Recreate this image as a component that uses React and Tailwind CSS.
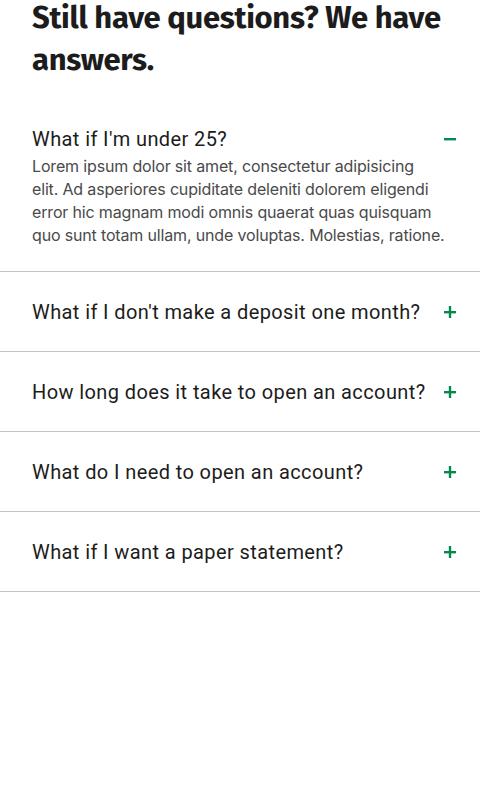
import React, { useState } from 'react';

const faqs = [
  {
    q: "What if I'm under 25?",
    a: [
      'Lorem ipsum dolor sit amet, consectetur adipisicing',
      'elit. Ad asperiores cupiditate deleniti dolorem eligendi',
      'error hic magnam modi omnis quaerat quas quisquam',
      'quo sunt totam ullam, unde voluptas. Molestias, ratione.',
    ],
  },
  { q: "What if I don't make a deposit one month?", a: ['Lorem ipsum dolor sit amet.'] },
  { q: 'How long does it take to open an account?', a: ['Lorem ipsum dolor sit amet.'] },
  { q: 'What do I need to open an account?', a: ['Lorem ipsum dolor sit amet.'] },
  { q: 'What if I want a paper statement?', a: ['Lorem ipsum dolor sit amet.'] },
];

function Icon({ open }) {
  return (
    <svg width="14" height="14" viewBox="0 0 14 14" className="shrink-0 text-[#008a4e]">
      <rect x="1" y="6" width="12" height="2.4" fill="currentColor" />
      {!open && <rect x="5.8" y="1" width="2.4" height="12" fill="currentColor" />}
    </svg>
  );
}

export default function App() {
  const [open, setOpen] = useState(0);

  return (
    <div className="min-h-[800px] bg-white font-['Inter',sans-serif]">
      <h1 className="pl-8 pr-4 -mt-[3px] text-[31px] font-bold leading-[42px] tracking-[-0.01em] text-[#1c1c1c] font-['Fira_Sans','Roboto',sans-serif]">
        Still have questions? We have answers.
      </h1>

      <div className="mt-[18px]">
        {faqs.map((f, i) => {
          const isOpen = open === i;
          return (
            <div key={i} className="border-b border-[#c4c4c4]">
              <button
                onClick={() => setOpen(isOpen ? -1 : i)}
                className={`flex w-full items-center justify-between gap-4 pl-8 pr-[23px] text-left ${isOpen ? 'pt-7' : 'pt-7 pb-[27px]'}`}
              >
                <span className="text-[20px] leading-6 tracking-[0.02em] text-[#1c1c1c] font-['Roboto',sans-serif]">{f.q}</span>
                <Icon open={isOpen} />
              </button>
              {isOpen && (
                <p className="pl-8 pr-2 pt-[4px] pb-6 text-[16px] leading-[23px] tracking-[-0.01em] text-[#4a4a4a]">
                  {f.a.map((line, j) => (
                    <React.Fragment key={j}>
                      {line}
                      {j < f.a.length - 1 && <br />}
                    </React.Fragment>
                  ))}
                </p>
              )}
            </div>
          );
        })}
      </div>
    </div>
  );
}
